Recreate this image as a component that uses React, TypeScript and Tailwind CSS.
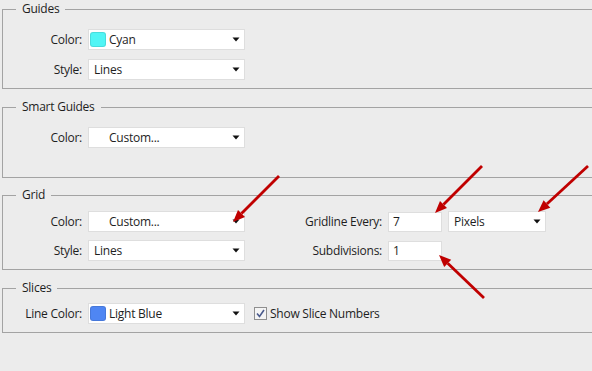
import React from "react";

const font = { fontFamily: '"Open Sans", "Noto Sans", sans-serif' };

function Arrow() {
  return (
    <svg width="8" height="5" viewBox="0 0 8 5" className="shrink-0">
      <path d="M0.5 0.5 L7.5 0.5 L4 4.5 Z" fill="#111" />
    </svg>
  );
}

function Select({
  value,
  width = "w-[157px]",
  swatch,
  indent,
}: {
  value: string;
  width?: string;
  swatch?: string;
  indent?: boolean;
}) {
  return (
    <div className={`${width} h-[21px] bg-white border border-[#dedede] flex items-center pr-[4px]`}>
      {swatch ? (
        <span
          className="ml-[1px] w-[16px] h-[15px] rounded-[3px] border border-black/10 shrink-0"
          style={{ backgroundColor: swatch }}
        />
      ) : indent ? (
        <span className="ml-[1px] w-[16px] shrink-0" />
      ) : null}
      <span className={`flex-1 ${swatch || indent ? "pl-[3px]" : "pl-[5px]"} text-[12px] text-[#1e1e1e] leading-none`}>
        {value}
      </span>
      <Arrow />
    </div>
  );
}

function Input({ value }: { value: string }) {
  return (
    <div className="w-[54px] h-[20px] bg-white border border-[#dedede] flex items-center pl-[4px] text-[12px] text-[#1e1e1e] leading-none">
      {value}
    </div>
  );
}

function Row({ label, children, labelW = "w-[79px]" }: { label: string; children: React.ReactNode; labelW?: string }) {
  return (
    <div className="flex items-center gap-[6px]">
      <span className={`${labelW} text-right text-[12px] text-[#1e1e1e] leading-none`}>{label}</span>
      {children}
    </div>
  );
}

function Group({ title, className, children }: { title: string; className: string; children: React.ReactNode }) {
  return (
    <fieldset className={`w-[640px] border border-[#a3a3a3] ${className}`}>
      <legend className="ml-[13px] px-[6px] text-[12px] leading-[16px] text-[#1e1e1e]">{title}</legend>
      {children}
    </fieldset>
  );
}

// red annotation arrows: shaft + filled head
const arrows = [
  { x1: 279, y1: 176, bx: 241.5, by: 213.5, head: "233,222 245,217 238,210" },
  { x1: 482, y1: 166, bx: 443.5, by: 204.5, head: "435,213 447,208 440,201" },
  { x1: 588, y1: 166, bx: 546.9, by: 204, head: "538,212 550.3,207.7 543.6,200.3" },
  { x1: 484, y1: 298, bx: 447.7, by: 263.3, head: "439,255 451.2,259.7 444.2,266.9" },
];

export default function App() {
  return (
    <div className="relative w-[592px] h-[371px] overflow-hidden bg-[#ececec] pl-[2px] pt-[1px] tracking-[-0.25px]" style={font}>
      <Group title="Guides" className="pt-[12px] pb-[8px]">
        <div className="flex flex-col gap-[9px]">
          <Row label="Color:">
            <Select value="Cyan" swatch="#50f5f5" />
          </Row>
          <Row label="Style:">
            <Select value="Lines" />
          </Row>
        </div>
      </Group>

      <Group title="Smart Guides" className="mt-[10px] pt-[12px] pb-[29px]">
        <Row label="Color:">
          <Select value="Custom..." indent />
        </Row>
      </Group>

      <Group title="Grid" className="mt-[9px] pt-[8px] pb-[8px]">
        <div className="flex">
          <div className="flex flex-col gap-[8px]">
            <Row label="Color:">
              <Select value="Custom..." indent />
            </Row>
            <Row label="Style:">
              <Select value="Lines" />
            </Row>
          </div>
          <div className="ml-[47px] flex flex-col gap-[9px]">
            <Row label="Gridline Every:" labelW="w-[90px]">
              <Input value="7" />
              <Select value="Pixels" width="w-[98px]" />
            </Row>
            <Row label="Subdivisions:" labelW="w-[90px]">
              <Input value="1" />
            </Row>
          </div>
        </div>
      </Group>

      <Group title="Slices" className="mt-[10px] pt-[7px] pb-[8px]">
        <Row label="Line Color:">
          <Select value="Light Blue" swatch="#4f86f3" />
          <label className="ml-[3px] flex items-center gap-[3px] text-[12px] text-[#1e1e1e] leading-none">
            <span className="w-[13px] h-[13px] border border-[#8f8f8f] bg-[#f4f4f4] flex items-center justify-center">
              <svg width="9" height="9" viewBox="0 0 9 9">
                <path d="M1 4.5 L3.5 7.5 L8 1" fill="none" stroke="#4a5a8c" strokeWidth="1.6" />
              </svg>
            </span>
            Show Slice Numbers
          </label>
        </Row>
      </Group>

      <svg className="absolute inset-0 pointer-events-none" width="592" height="371">
        {arrows.map((a, i) => (
          <g key={i}>
            <line x1={a.x1} y1={a.y1} x2={a.bx} y2={a.by} stroke="#c00000" strokeWidth="2.8" />
            <polygon points={a.head} fill="#c00000" />
          </g>
        ))}
      </svg>
    </div>
  );
}
